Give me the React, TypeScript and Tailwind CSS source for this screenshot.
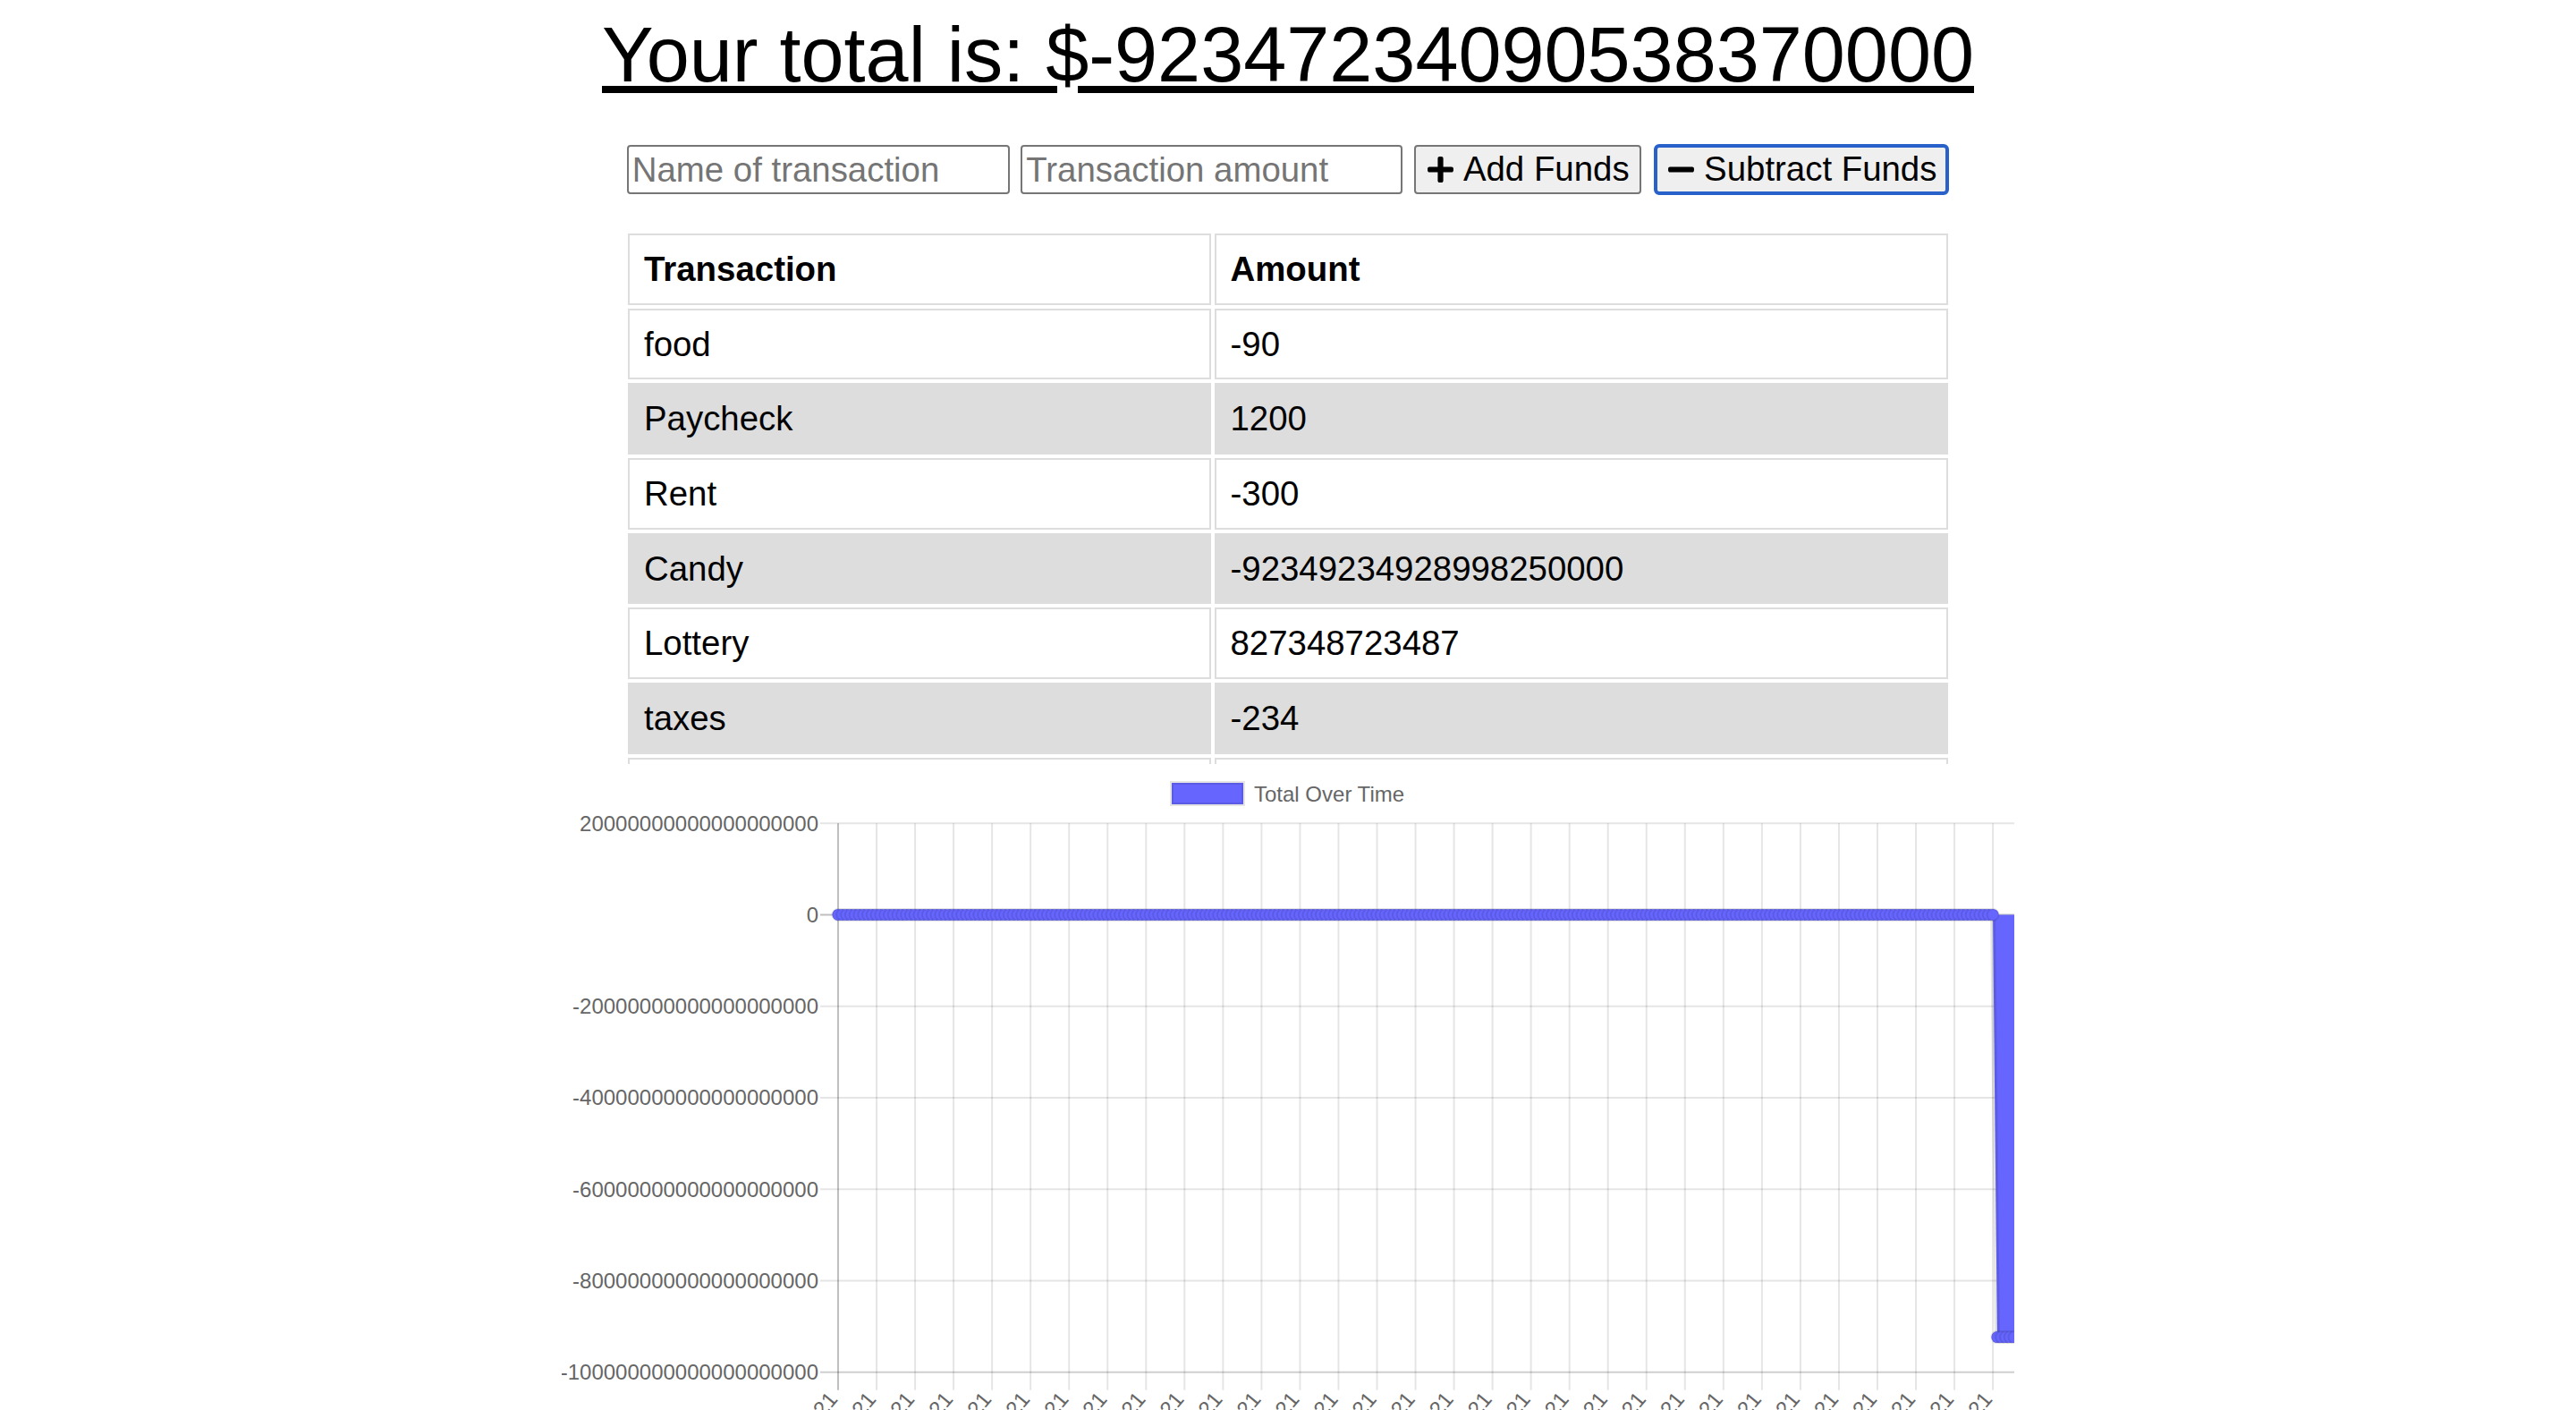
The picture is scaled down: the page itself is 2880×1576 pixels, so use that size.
import React from "react";
import { FaPlus, FaMinus } from "react-icons/fa";

const rows: [string, string][] = [
  ["food", "-90"],
  ["Paycheck", "1200"],
  ["Rent", "-300"],
  ["Candy", "-92349234928998250000"],
  ["Lottery", "827348723487"],
  ["taxes", "-234"],
  ["bills", "-50"],
  ["gas", "-40"],
];

const yTicks: [number, string][] = [
  [66.2, "20000000000000000000"],
  [168.45, "0"],
  [270.7, "-20000000000000000000"],
  [372.95, "-40000000000000000000"],
  [475.2, "-60000000000000000000"],
  [577.45, "-80000000000000000000"],
  [679.7, "-100000000000000000000"],
];

const N = 276;
const LEFT = 309;
const RIGHT = 1624;
const STEP = (RIGHT - LEFT) / (N - 1);
const ZERO_Y = 168.45;
const LOW_Y = 640.6;

const points = Array.from({ length: N }, (_, i) => ({
  x: LEFT + i * STEP,
  y: i <= 270 ? ZERO_Y : LOW_Y,
}));

const months = ["3/22/2021", "3/29/2021", "4/5/2021", "4/12/2021", "4/19/2021", "4/26/2021"];

function Chart() {
  const lastZero = points[270];
  const firstLow = points[271];
  return (
    <svg width={1624} height={760} viewBox="0 0 1624 760" fontFamily="'Liberation Sans', Arial, sans-serif" className="block">
      {/* legend */}
      <rect x={682} y={21} width={80} height={24} fill="#6666ff" stroke="rgba(0,0,0,0.1)" strokeWidth={4} />
      <text x={774} y={33} fontSize={24} fill="#666" dominantBaseline="central">Total Over Time</text>

      {/* horizontal grid */}
      {yTicks.map(([y, label], i) => (
        <g key={"h" + i}>
          <line x1={289} x2={RIGHT} y1={y} y2={y} stroke={i === 1 ? "rgba(0,0,0,0.25)" : i === 6 ? "rgba(0,0,0,0.19)" : "rgba(0,0,0,0.1)"} strokeWidth={2} />
          <text x={287} y={y} fontSize={24} fill="#666" textAnchor="end" dominantBaseline="central">{label}</text>
        </g>
      ))}

      {/* vertical grid */}
      {Array.from({ length: 31 }, (_, k) => {
        const x = LEFT + 9 * k * STEP;
        return (
          <g key={"v" + k}>
            <line x1={x} x2={x} y1={66.2} y2={699.7} stroke={k === 0 ? "rgba(0,0,0,0.25)" : "rgba(0,0,0,0.1)"} strokeWidth={2} />
            <text
              x={0}
              y={0}
              fontSize={24}
              fill="#666"
              textAnchor="end"
              dominantBaseline="central"
              transform={`translate(${x - 6} 705) rotate(-50)`}
            >
              {months[k % months.length]}
            </text>
          </g>
        );
      })}

      {/* fill */}
      <polygon
        points={`${lastZero.x},${ZERO_Y} ${firstLow.x},${LOW_Y} ${RIGHT},${LOW_Y} ${RIGHT},${ZERO_Y}`}
        fill="#6666ff"
      />
      {/* line */}
      <polyline
        points={points.map((p) => `${p.x},${p.y}`).join(" ")}
        fill="none"
        stroke="rgba(0,0,0,0.1)"
        strokeWidth={6}
        strokeLinejoin="round"
      />
      {/* points */}
      {points.map((p, i) => (
        <circle key={i} cx={p.x} cy={p.y} r={6.5} fill="#6666ff" stroke="rgba(0,0,0,0.1)" strokeWidth={2} />
      ))}
    </svg>
  );
}

export default function App() {
  return (
    <div className="w-[2880px] min-h-screen bg-white text-black font-['Liberation_Sans',Arial,Helvetica,sans-serif]">
      <h1 className="pt-[12px] text-center text-[86.4px] leading-[99px] font-normal">
        <span className="underline">Your total is: $-92347234090538370000</span>
      </h1>

      <div className="mt-[50px] flex justify-center items-center">
        <input
          className="w-[428px] h-[55px] border-2 border-[#767676] rounded-[4px] px-[4px] text-[38.4px] placeholder:text-[#757575] bg-white outline-none"
          placeholder="Name of transaction"
        />
        <input
          className="ml-[12.5px] w-[427px] h-[55px] border-2 border-[#767676] rounded-[4px] px-[4px] text-[38.4px] placeholder:text-[#757575] bg-white outline-none"
          placeholder="Transaction amount"
        />
        <button className="ml-[12.5px] w-[254px] h-[55px] border-2 border-[#767676] rounded-[4px] bg-[#efefef] flex items-center justify-center gap-[9px] text-[38.4px] leading-none">
          <FaPlus size={33} />
          <span>Add Funds</span>
        </button>
        <button className="ml-[14.5px] w-[330px] h-[57px] border-[4px] border-[#2761c9] rounded-[6px] bg-[#efefef] flex items-center justify-center gap-[9px] text-[38.4px] leading-none">
          <FaMinus size={33} />
          <span>Subtract Funds</span>
        </button>
      </div>

      <div className="mt-[39px] mx-auto w-[1484px] h-[597px] overflow-hidden">
        <table className="table-fixed w-[1484px] border-separate border-spacing-[4px] text-[38.4px] leading-[44px]">
          <thead>
            <tr>
              <th className="w-[651.5px] h-[79.7px] border-2 border-[#dddddd] bg-white px-[16px] text-left font-bold align-middle">Transaction</th>
              <th className="h-[79.7px] border-2 border-[#dddddd] bg-white px-[16px] text-left font-bold align-middle">Amount</th>
            </tr>
          </thead>
          <tbody>
            {rows.map(([name, amt], i) => (
              <tr key={i}>
                <td className={`h-[79.7px] border-2 border-[#dddddd] px-[16px] align-middle ${i % 2 === 1 ? "bg-[#dddddd]" : "bg-white"}`}>{name}</td>
                <td className={`h-[79.7px] border-2 border-[#dddddd] px-[16px] align-middle ${i % 2 === 1 ? "bg-[#dddddd]" : "bg-white"}`}>{amt}</td>
              </tr>
            ))}
          </tbody>
        </table>
      </div>

      <div className="mx-auto w-[1624px]">
        <Chart />
      </div>
    </div>
  );
}
